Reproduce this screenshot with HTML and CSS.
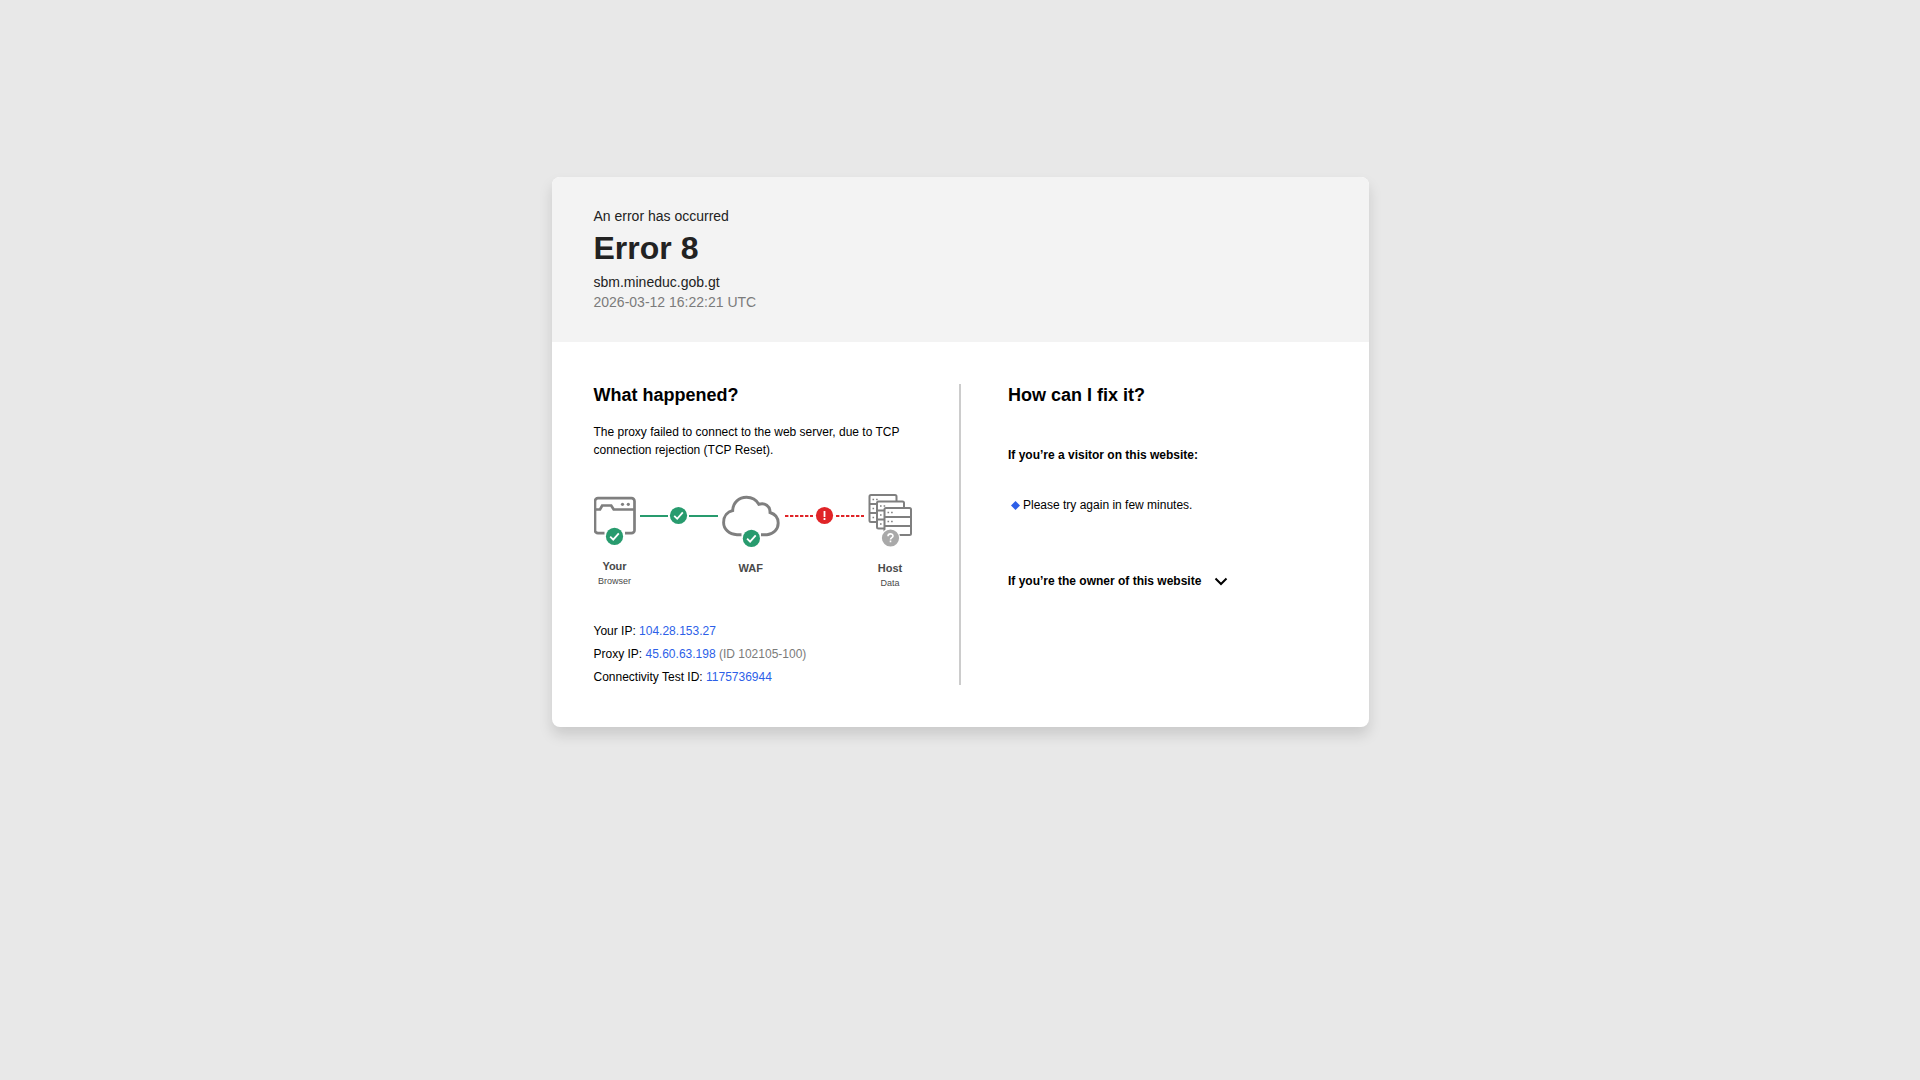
FILE: index.html
```html
<!DOCTYPE html>
<html lang="en">
<head>
<meta charset="utf-8">
<meta name="viewport" content="width=device-width, initial-scale=1">
<title>Error 8</title>
<link rel="stylesheet" href="styles.css">
</head>
<body>
<main class="card">
  <header class="card-header">
    <p>An error has occurred</p>
    <h1>Error 8</h1>
    <p>sbm.mineduc.gob.gt</p>
    <p class="muted">2026-03-12 16:22:21 UTC</p>
  </header>
  <div class="card-body">
    <section class="happened">
      <h2>What happened?</h2>
      <p class="description">The proxy failed to connect to the web server, due to TCP connection rejection (TCP Reset).</p>
      <div class="diagram">
        <div class="node">
          <svg width="42" height="51" viewBox="0 0 42 51" fill="none" aria-hidden="true">
            <path d="M10.500 39.200H4a3 3 0 0 1-3-3V7.200a3 3 0 0 1 3-3h33.500a3 3 0 0 1 3 3v29a3 3 0 0 1-3 3H31M1.500 15.500H6l2.200-4h9l2.500 4H40.500" stroke="#7f7f7f" stroke-width="2.700"/>
            <circle cx="28.500" cy="10.300" r="1.600" fill="#7f7f7f"/><circle cx="34.300" cy="10.300" r="1.600" fill="#7f7f7f"/>
            <circle cx="20.500" cy="42.400" r="8.600" fill="#289b6e"/>
            <path d="M16.200 42.700l3 3 5.600-6.400" stroke="#fff" stroke-width="1.800"/>
          </svg>
          <strong>Your</strong>
          <span>Browser</span>
        </div>
        <svg class="link" width="78" height="20" viewBox="0 0 78 20" fill="none" aria-hidden="true">
          <path d="M0 10h28M49 10h29" stroke="#289b6e" stroke-width="2"/>
          <circle cx="38.500" cy="9.500" r="8.600" fill="#289b6e"/>
          <path d="M34.200 9.800l3 3 5.600-6.400" stroke="#fff" stroke-width="1.800"/>
        </svg>
        <div class="node">
          <svg width="58" height="53" viewBox="0 0 58 53" fill="none" aria-hidden="true">
            <path d="M19.500 40.700H15C7 40.200 1.600 35 1.600 28.500c0-6.500 4-10.800 9.100-12C11 8.500 17 3.300 24.500 3.300c5.500 0 9.800 2.600 12.300 7 6-2 11.500 1.800 11.200 8.200 5 1.500 8.200 5.500 8.200 10.500C56.200 35.500 51.500 40.200 45 40.700h-6" stroke="#7f7f7f" stroke-width="2.900"/>
            <circle cx="29.400" cy="44.400" r="8.600" fill="#289b6e"/>
            <path d="M25.100 44.700l3 3 5.600-6.400" stroke="#fff" stroke-width="1.800"/>
          </svg>
          <strong>WAF</strong>
        </div>
        <svg class="link" width="80" height="20" viewBox="0 0 80 20" fill="none" aria-hidden="true">
          <path d="M1 10h28M52 10h28" stroke="#e02427" stroke-width="2" stroke-dasharray="3.400 1.600"/>
          <circle cx="40.500" cy="9.500" r="8.600" fill="#e02427"/>
          <path d="M40.500 5v6M40.500 12v2" stroke="#fff" stroke-width="1.800"/>
        </svg>
        <div class="node">
          <svg width="44" height="53" viewBox="0 0 44 53" fill="none" aria-hidden="true">
            <g fill="#fff" stroke="#7f7f7f" stroke-width="2">
              <rect x="1.500" y="1" width="27" height="27" rx="1.500"/>
              <path d="M1.500 10h27M1.500 19h27"/>
              <rect x="9" y="7.500" width="27" height="27" rx="1.500"/>
              <path d="M9 16.500h27M9 25.500h27"/>
              <rect x="16.500" y="14" width="26.500" height="27" rx="1.500"/>
              <path d="M16.500 23h26.500M16.500 32h26.500"/>
            </g>
            <path d="M4.500 5.500h1.600m2 0h1.600M4.500 14.500h1.600M4.500 23.500h1.600M12 12h1.600m2 0h1.600M12 21h1.600M12 30h1.600M19.500 18.500h1.600m2 0h1.600M19.500 27.500h1.600m2 0h1.600" stroke="#7f7f7f" stroke-width="1.500"/>
            <circle cx="22.500" cy="44" r="9.800" fill="#fff"/>
            <circle cx="22.500" cy="44" r="8.600" fill="#a9a9a9"/>
            <path d="M20 42.200c0-3.200 5-3 5-.3 0 1.800-2.500 1.600-2.500 3.600M22.500 46.500v1.800" stroke="#fff" stroke-width="1.600"/>
          </svg>
          <strong>Host</strong>
          <span>Data</span>
        </div>
      </div>
      <ul class="details">
        <li>Your IP: <a href="#your-ip">104.28.153.27</a></li>
        <li>Proxy IP: <a href="#proxy-ip">45.60.63.198</a> <span class="muted">(ID 102105-100)</span></li>
        <li>Connectivity Test ID: <a href="#test-id">1175736944</a></li>
      </ul>
    </section>
    <section class="fix">
      <h2>How can I fix it?</h2>
      <h3>If you’re a visitor on this website:</h3>
      <ul class="tips">
        <li>Please try again in few minutes.</li>
      </ul>
      <button class="owner" type="button" aria-expanded="false">If you’re the owner of this website
        <svg width="14" height="10" viewBox="0 0 14 10" fill="none" aria-hidden="true"><path d="M1.500 1.500L7 7 12.500 1.500" stroke="#000" stroke-width="2"/></svg>
      </button>
    </section>
  </div>
</main>
</body>
</html>
```
FILE: styles.css
```css
* {
  box-sizing: border-box;
}

body {
  margin: 0;
  padding: 177px 16px 32px;
  background: #e8e8e8;
  color: #000;
  font: 12px/15px "Liberation Sans", Arial, sans-serif;
}

h1, h2, h3, p, ul {
  margin: 0;
  padding: 0;
}

ul {
  list-style: none;
}

a {
  color: #2d5fe8;
  text-decoration: none;
}

.muted {
  color: #7b7b7b;
}

.card {
  max-width: 817px;
  margin: 0 auto;
  overflow: hidden;
  border-radius: 8px;
  background: #fff;
  box-shadow: 0 8px 14px rgba(0, 0, 0, 0.13);
}

.card-header {
  padding: 29px 42px 30px;
  background: #f3f3f3;
  color: #222;
  font-size: 14px;
  line-height: 20px;
}

h1 {
  margin: 4px 0 6px;
  font-size: 32px;
  line-height: 36px;
}

h2 {
  font-size: 18px;
  line-height: 22px;
}

h3 {
  margin-top: 42px;
  font-size: 12px;
  line-height: 15px;
}

.card-body {
  display: grid;
  grid-template-columns: 1fr 1fr;
  padding: 42px;
}

.happened {
  padding-right: 47px;
  border-right: 2px solid #ccc;
  margin-right: -1px;
}

.fix {
  padding-left: 48px;
}

.description {
  margin-top: 17px;
  line-height: 18px;
}

.diagram {
  display: flex;
  justify-content: space-between;
  align-items: flex-start;
  margin-top: 35px;
  color: #4a4a4a;
}

.node {
  display: flex;
  flex-direction: column;
  align-items: center;
}

.node svg {
  display: block;
  margin-bottom: 14px;
}

.node strong {
  font-size: 11px;
  line-height: 15px;
}

.node span {
  font-size: 9px;
  line-height: 14px;
}

.link {
  margin-top: 12px;
}

.details {
  display: grid;
  gap: 8px;
  margin-top: 34px;
}

.tips {
  margin-top: 35px;
  padding-left: 3px;
}

.tips li {
  display: flex;
  align-items: center;
  gap: 3px;
}

.tips li::before {
  content: "";
  width: 9px;
  height: 9px;
  background: #2d5fe8;
  clip-path: polygon(50% 0, 100% 50%, 50% 100%, 0 50%);
}

.owner {
  display: flex;
  align-items: center;
  gap: 13px;
  margin-top: 61px;
  padding: 0;
  border: 0;
  background: none;
  color: inherit;
  font: inherit;
  font-weight: 700;
  cursor: pointer;
}

@media (max-width: 760px) {
  .card-body {
    grid-template-columns: 1fr;
    gap: 42px;
  }

  .happened {
    margin-right: 0;
    padding-right: 0;
    border-right: 0;
  }

  .fix {
    padding-left: 0;
  }
}
```
